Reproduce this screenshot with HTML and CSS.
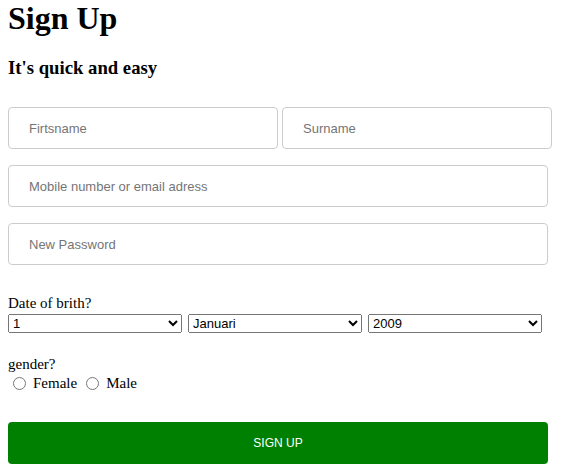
FILE: index.html
```html
<!DOCTYPE html>
<html>
<head>
<meta charset="utf-8">
<link rel="stylesheet" href="styles.css">
</head>
<body>
<h1 class="title">Sign Up</h1>
<h3 class="subtitle">It's quick and easy</h3>
<form class="form">
  <div class="row">
    <input class="field half" type="text" placeholder="Firtsname">
    <input class="field half" type="text" placeholder="Surname">
  </div>
  <input class="field full" type="text" placeholder="Mobile number or email adress">
  <input class="field full" type="password" placeholder="New Password">
  <div class="group dob">
    <div class="label dob-label">Date of brith?</div>
    <div class="selects">
      <select class="sel"><option>1</option></select>
      <select class="sel"><option>Januari</option></select>
      <select class="sel"><option>2009</option></select>
    </div>
  </div>
  <div class="group gender">
    <div class="label">gender?</div>
    <div class="radios">
      <label class="opt"><input type="radio" name="g" class="radio"><span>Female</span></label>
      <label class="opt"><input type="radio" name="g" class="radio"><span>Male</span></label>
    </div>
  </div>
  <button class="submit" type="button">SIGN UP</button>
</form>
</body>
</html>
```
FILE: styles.css
```css
html, body {
  background: #fff;
}
body {
  margin: 0 8px;
  font-family: "Liberation Serif", "Times New Roman", serif;
  color: #000;
}
.title {
  font-size: 32px;
  font-weight: bold;
  margin: 0;
  line-height: 37px;
}
.subtitle {
  font-size: 18.72px;
  font-weight: bold;
  margin: 20px 0 0 0;
}
.form {
  display: flex;
  flex-direction: column;
  margin-top: 28px;
}
.row {
  display: flex;
  gap: 4px;
}
.field {
  box-sizing: border-box;
  height: 42px;
  border: 1px solid #ccc;
  border-radius: 4px;
  padding: 0 20px;
  font-family: "Liberation Sans", Arial, sans-serif;
  font-size: 13px;
  outline: none;
  background: #fff;
}
.field::placeholder {
  color: #757575;
}
.half {
  width: 270px;
}
.full {
  width: 540px;
  margin-top: 16px;
}
.group {
  font-size: 15px;
}
.dob {
  margin-top: 28px;
}
.label {
  line-height: 17px;
}
.dob-label {
  line-height: 20px;
  margin-bottom: 1px;
}
.selects {
  display: flex;
  gap: 6px;
}
.sel {
  width: 174px;
  height: 19px;
  font-family: "Liberation Sans", Arial, sans-serif;
  font-size: 13px;
  margin: 0;
}
.gender {
  margin-top: 23px;
}
.radios {
  display: flex;
  align-items: center;
  height: 20px;
  gap: 9px;
  padding-left: 5px;
}
.opt {
  display: flex;
  align-items: center;
  gap: 7px;
}
.radio {
  width: 13px;
  height: 13px;
  margin: 0;
}
.submit {
  margin-top: 29px;
  width: 540px;
  height: 42px;
  border: none;
  border-radius: 4px;
  background: #008000;
  color: #fff;
  font-family: "Liberation Sans", Arial, sans-serif;
  font-size: 12px;
}
```
